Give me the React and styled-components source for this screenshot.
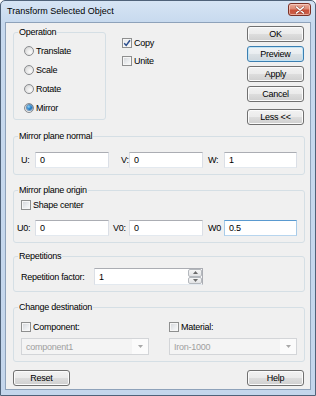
import React from 'react';
import styled, { createGlobalStyle, css } from 'styled-components';

const Global = createGlobalStyle`
  html, body { margin: 0; padding: 0; background: #ffffff; }
  body { font-family: "Liberation Sans", Arial, sans-serif; }
  * { box-sizing: border-box; }
`;

const Window = styled.div`
  width: 316px;
  height: 396px;
  border: 1px solid #4f6279;
  border-radius: 5px 5px 0 0;
  background: linear-gradient(#d6e4f4, #c7d9ee 22px, #c4d6ec);
  display: flex;
  flex-direction: column;
  color: #000;
`;

const TitleBar = styled.div`
  height: 21px;
  flex: none;
  display: flex;
  align-items: flex-start;
  padding-left: 6px;
  padding-right: 4px;
`;

const Title = styled.div`
  font-size: 9px;
  line-height: 21px;
  flex: 1;
  color: #000;
`;

const CloseButton = styled.div`
  width: 23px;
  height: 13px;
  margin-top: 2px;
  border: 1px solid #7b3126;
  border-radius: 3px;
  background: linear-gradient(#eaaa99 0%, #dd8a74 45%, #c9503a 55%, #c9604a 100%);
  box-shadow: inset 0 0 0 1px rgba(255, 220, 210, 0.6);
  display: flex;
  align-items: center;
  justify-content: center;
`;

const Client = styled.div`
  flex: 1;
  margin: 0 4px 5px 4px;
  border: 1px solid #8ea2ba;
  background: #f0f0f0;
  padding: 3px 5px 0 7px;
  display: flex;
  flex-direction: column;
  font-size: 9px;
  letter-spacing: -0.25px;
`;

const TopRow = styled.div`
  display: flex;
  align-items: flex-start;
`;

const Group = styled.fieldset`
  margin: ${p => p.$mt || 0}px 0 0 0;
  padding: 0;
  border: 1px solid #d5dfe5;
  border-radius: 3px;
  min-width: 0;
  width: ${p => (p.$w ? `${p.$w}px` : 'auto')};
  flex: none;
`;

const Legend = styled.legend`
  margin-left: 4px;
  padding: 0 1px;
  font-size: 9px;
  line-height: 11px;
  color: #000;
`;

const RadioList = styled.div`
  display: flex;
  flex-direction: column;
  padding: 3px 0 2px 10px;
`;

const CheckLine = styled.div`
  display: flex;
  flex-direction: column;
  padding-left: 7px;
`;

const OptionRow = styled.label`
  height: ${p => p.$h || 19}px;
  display: flex;
  align-items: center;
  gap: 2px;
  white-space: nowrap;
`;

const RadioCircle = styled.span`
  width: 10px;
  height: 10px;
  flex: none;
  border-radius: 50%;
  border: 1px solid #8a8c8f;
  background: radial-gradient(circle at 65% 65%, #fbfbfb 0%, #e6e6e6 50%, #c9c9c9 100%);
  display: flex;
  align-items: center;
  justify-content: center;
`;

const RadioDot = styled.span`
  width: 5px;
  height: 5px;
  border-radius: 50%;
  background: radial-gradient(circle at 35% 35%, #8fd4f8 0%, #2a86cf 45%, #0f4f92 100%);
  box-shadow: 0 0 0 1px rgba(27, 94, 156, 0.6);
`;

const CheckBoxSquare = styled.span`
  width: 10px;
  height: 10px;
  flex: none;
  border: 1px solid #8e8f8f;
  background: linear-gradient(135deg, #d2d4d8 0%, #eceef0 60%, #fbfbfb 100%);
  box-shadow: inset 0 0 0 1px #f6f6f6;
  display: flex;
  align-items: center;
  justify-content: center;
  ${p => p.$checked && css`
    background: linear-gradient(135deg, #e6e8ec 0%, #f7f7f7 100%);
  `}
`;

const OptionsCol = styled.div`
  display: flex;
  flex-direction: column;
  margin-left: 16px;
  padding-top: 8px;
`;

const ButtonCol = styled.div`
  margin-left: auto;
  margin-right: 1px;
  display: flex;
  flex-direction: column;
  gap: 4px;
`;

const Button = styled.button`
  width: 57px;
  height: 16px;
  margin: ${p => p.$mt || 0}px 0 0 0;
  padding: 0;
  border: 1px solid #707070;
  border-radius: 3px;
  background: linear-gradient(#f2f2f2 0%, #ebebeb 48%, #dddddd 52%, #cfcfcf 100%);
  box-shadow: inset 0 0 0 1px #fbfbfb;
  font-family: "Liberation Sans", Arial, sans-serif;
  font-size: 9px;
  letter-spacing: -0.25px;
  color: #000;
  display: flex;
  align-items: center;
  justify-content: center;
  ${p => p.$default && css`
    border-color: #3c7fb1;
    box-shadow: inset 0 0 0 1px #c4e5f6;
    background: linear-gradient(#f1f4f6 0%, #e9edf0 48%, #dbe1e5 52%, #ced6dc 100%);
  `}
`;

const FieldRow = styled.div`
  display: grid;
  grid-template-columns: 21px 74px 20px 74px 21px 73px;
  align-items: center;
  margin-top: ${p => p.$mt || 0}px;
`;

const FieldLabel = styled.span`
  padding-left: ${p => p.$indent || 0}px;
  white-space: nowrap;
`;

const TextBox = styled.div`
  height: 16px;
  border: 1px solid #abadb3;
  border-left-color: #dbdfe6;
  border-right-color: #dbdfe6;
  border-bottom-color: #e3e9ef;
  background: #ffffff;
  padding-left: 4px;
  display: flex;
  align-items: center;
  ${p => p.$focused && css`
    border-color: #5a9ad0;
    border-left-color: #a8cbe8;
    border-right-color: #a8cbe8;
    border-bottom-color: #b7d5ee;
  `}
`;

const GroupBody = styled.div`
  padding: ${p => p.$pad};
`;

const RepRow = styled.div`
  display: flex;
  align-items: center;
`;

const RepLabel = styled.span`
  width: 80px;
  padding-left: 7px;
  white-space: nowrap;
`;

const Spinner = styled.div`
  width: 109px;
  height: 17px;
  border: 1px solid #abadb3;
  border-left-color: #dbdfe6;
  border-bottom-color: #e3e9ef;
  background: #fff;
  display: flex;
`;

const SpinText = styled.div`
  flex: 1;
  padding-left: 4px;
  display: flex;
  align-items: center;
`;

const SpinButtons = styled.div`
  width: 14px;
  display: flex;
  flex-direction: column;
`;

const SpinButton = styled.div`
  flex: 1;
  border: 1px solid #b4b8bd;
  border-radius: 2px;
  background: linear-gradient(#f6f6f6, #e2e3e5);
  display: flex;
  align-items: center;
  justify-content: center;
`;

const DestGrid = styled.div`
  display: grid;
  grid-template-columns: 128px 128px;
  column-gap: 20px;
  padding: 7px 0 6px 7px;
`;

const DestCol = styled.div`
  display: flex;
  flex-direction: column;
  gap: 4px;
`;

const Combo = styled.div`
  height: 17px;
  border: 1px solid #d3d5d8;
  background: #f4f4f4;
  color: #a0a0a0;
  display: flex;
  align-items: stretch;
`;

const ComboText = styled.div`
  flex: 1;
  padding-left: 4px;
  display: flex;
  align-items: center;
`;

const ComboArrow = styled.div`
  width: 16px;
  background: #fbfbfb;
  display: flex;
  align-items: center;
  justify-content: center;
`;

const BottomRow = styled.div`
  display: flex;
  justify-content: space-between;
  margin-top: 8px;
  padding-right: 1px;
`;

const Radio = ({ label, checked }) => (
  <OptionRow>
    <RadioCircle>{checked && <RadioDot />}</RadioCircle>
    <span>{label}</span>
  </OptionRow>
);

const Check = ({ label, checked, h }) => (
  <OptionRow $h={h}>
    <CheckBoxSquare $checked={checked}>
      {checked && (
        <svg width="8" height="8" viewBox="0 0 8 8">
          <path d="M1.2 4.2 L3.2 6.4 L7 1.2" fill="none" stroke="#2d4f8e" strokeWidth="1.5" />
        </svg>
      )}
    </CheckBoxSquare>
    <span>{label}</span>
  </OptionRow>
);

const Arrow = ({ up, color = '#6b6b6b' }) => (
  <svg width="5" height="3" viewBox="0 0 5 3">
    <path d={up ? 'M0 3 L2.5 0 L5 3 Z' : 'M0 0 L5 0 L2.5 3 Z'} fill={color} />
  </svg>
);

export default function App() {
  return (
    <>
      <Global />
      <Window>
        <TitleBar>
          <Title>Transform Selected Object</Title>
          <CloseButton>
            <svg width="10" height="8" viewBox="0 0 10 8">
              <path d="M1.5 1 L8.5 7 M8.5 1 L1.5 7" stroke="#5a1d14" strokeWidth="2.6" strokeLinecap="round" opacity="0.5" />
              <path d="M1.5 1 L8.5 7 M8.5 1 L1.5 7" stroke="#ffffff" strokeWidth="1.6" strokeLinecap="round" />
            </svg>
          </CloseButton>
        </TitleBar>
        <Client>
          <TopRow>
            <Group $w={93} $mt={1}>
              <Legend>Operation</Legend>
              <RadioList>
                <Radio label="Translate" />
                <Radio label="Scale" />
                <Radio label="Rotate" />
                <Radio label="Mirror" checked />
              </RadioList>
            </Group>
            <OptionsCol>
              <Check label="Copy" checked h={18} />
              <Check label="Unite" h={18} />
            </OptionsCol>
            <ButtonCol>
              <Button>OK</Button>
              <Button $default>Preview</Button>
              <Button>Apply</Button>
              <Button>Cancel</Button>
              <Button $mt={3}>Less &lt;&lt;</Button>
            </ButtonCol>
          </TopRow>

          <Group $mt={6}>
            <Legend>Mirror plane normal</Legend>
            <GroupBody $pad="10px 0 6px 0">
              <FieldRow>
                <FieldLabel $indent={7}>U:</FieldLabel>
                <TextBox>0</TextBox>
                <FieldLabel $indent={12}>V:</FieldLabel>
                <TextBox>0</TextBox>
                <FieldLabel $indent={5}>W:</FieldLabel>
                <TextBox>1</TextBox>
              </FieldRow>
            </GroupBody>
          </Group>

          <Group $mt={10}>
            <Legend>Mirror plane origin</Legend>
            <GroupBody $pad="2px 0 6px 0">
              <CheckLine>
                <Check label="Shape center" h={14} />
              </CheckLine>
              <FieldRow $mt={8}>
                <FieldLabel $indent={3}>U0:</FieldLabel>
                <TextBox>0</TextBox>
                <FieldLabel $indent={4}>V0:</FieldLabel>
                <TextBox>0</TextBox>
                <FieldLabel $indent={5}>W0</FieldLabel>
                <TextBox $focused>0.5</TextBox>
              </FieldRow>
            </GroupBody>
          </Group>

          <Group $mt={8}>
            <Legend>Repetitions</Legend>
            <GroupBody $pad="6px 0 6px 0">
              <RepRow>
                <RepLabel>Repetition factor:</RepLabel>
                <Spinner>
                  <SpinText>1</SpinText>
                  <SpinButtons>
                    <SpinButton><Arrow up /></SpinButton>
                    <SpinButton><Arrow /></SpinButton>
                  </SpinButtons>
                </Spinner>
              </RepRow>
            </GroupBody>
          </Group>

          <Group $mt={10}>
            <Legend>Change destination</Legend>
            <DestGrid>
              <DestCol>
                <Check label="Component:" h={14} />
                <Combo>
                  <ComboText>component1</ComboText>
                  <ComboArrow><Arrow color="#a8a8a8" /></ComboArrow>
                </Combo>
              </DestCol>
              <DestCol>
                <Check label="Material:" h={14} />
                <Combo>
                  <ComboText>Iron-1000</ComboText>
                  <ComboArrow><Arrow color="#a8a8a8" /></ComboArrow>
                </Combo>
              </DestCol>
            </DestGrid>
          </Group>

          <BottomRow>
            <Button>Reset</Button>
            <Button>Help</Button>
          </BottomRow>
        </Client>
      </Window>
    </>
  );
}
